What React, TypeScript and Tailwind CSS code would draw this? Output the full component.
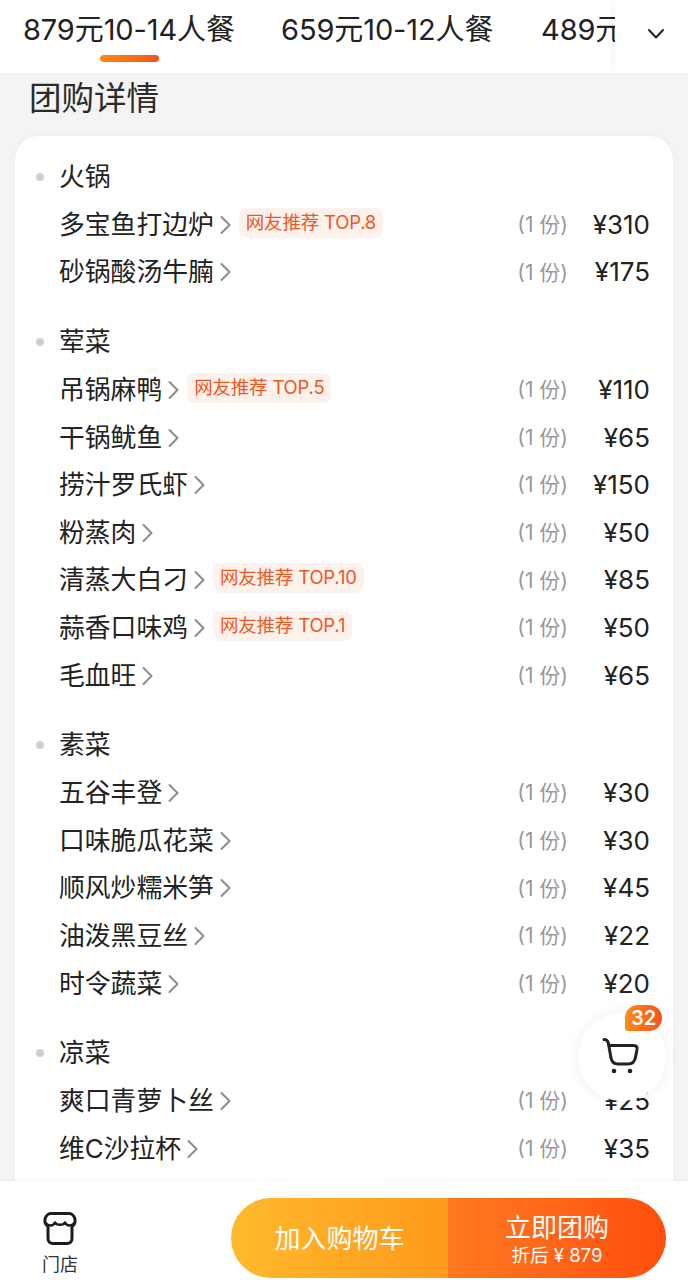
const font = { fontFamily: 'Inter, "Noto Sans CJK SC", sans-serif' };

type Dish = { name: string; price: number; top?: string };

const sections: { title: string; dishes: Dish[] }[] = [
  {
    title: '火锅',
    dishes: [
      { name: '多宝鱼打边炉', price: 310, top: 'TOP.8' },
      { name: '砂锅酸汤牛腩', price: 175 },
    ],
  },
  {
    title: '荤菜',
    dishes: [
      { name: '吊锅麻鸭', price: 110, top: 'TOP.5' },
      { name: '干锅鱿鱼', price: 65 },
      { name: '捞汁罗氏虾', price: 150 },
      { name: '粉蒸肉', price: 50 },
      { name: '清蒸大白刁', price: 85, top: 'TOP.10' },
      { name: '蒜香口味鸡', price: 50, top: 'TOP.1' },
      { name: '毛血旺', price: 65 },
    ],
  },
  {
    title: '素菜',
    dishes: [
      { name: '五谷丰登', price: 30 },
      { name: '口味脆瓜花菜', price: 30 },
      { name: '顺风炒糯米笋', price: 45 },
      { name: '油泼黑豆丝', price: 22 },
      { name: '时令蔬菜', price: 20 },
    ],
  },
  {
    title: '凉菜',
    dishes: [
      { name: '爽口青萝卜丝', price: 25 },
      { name: '维C沙拉杯', price: 35 },
    ],
  },
];

function Arrow() {
  return (
    <svg className="ml-[5px] shrink-0" width="13" height="22" viewBox="0 0 13 22" fill="none" stroke="#8c8c8c" strokeWidth="2" strokeLinecap="round" strokeLinejoin="round">
      <path d="M2.500 3l8 8-8 8" />
    </svg>
  );
}

function DishRow({ dish }: { dish: Dish }) {
  return (
    <div className="flex h-[47.6px] items-center pr-[23px] pl-[44px]">
      <span className="text-[25.8px] leading-none text-[#222]">{dish.name}</span>
      <Arrow />
      {dish.top && (
        <span className="relative -top-[2px] ml-[7px] flex h-[30px] items-center rounded-[8px] bg-[#fdf1ec] px-[7px] text-[18.5px] tracking-[-0.2px] text-[#f0561f]">
          网友推荐 {dish.top}
        </span>
      )}
      <span className="ml-auto text-[21px] text-[#999]">(1 份)</span>
      <span className="w-[82px] text-right text-[26px] leading-none text-[#222]">¥{dish.price}</span>
    </div>
  );
}

export default function App() {
  return (
    <div className="relative flex h-[1280px] w-[688px] flex-col overflow-hidden bg-[#f4f4f4]" style={font}>
      <div className="relative h-[73px] shrink-0 overflow-hidden bg-white">
        <div className="flex h-[58px] items-center whitespace-nowrap pl-[23px] text-[29px] leading-none tracking-[-0.1px] text-[#222]">
          <span className="w-[258px]">879元10-14人餐</span>
          <span className="w-[260px]">659元10-12人餐</span>
          <span>489元</span>
        </div>
        <div className="absolute top-[55px] left-[100px] h-[7px] w-[59px] rounded-full bg-gradient-to-r from-[#ff8a0d] to-[#f4511e]" />
        <div className="absolute top-0 right-0 flex h-[73px] w-[73px] items-center justify-center bg-white shadow-[-3px_0_6px_rgba(0,0,0,0.03)]">
          <svg className="mt-[-6px] ml-[8px]" width="18" height="12" viewBox="0 0 18 12" fill="none" stroke="#222" strokeWidth="2" strokeLinecap="round" strokeLinejoin="round">
            <path d="M2 2l7 7.500L16 2" />
          </svg>
        </div>
      </div>

      <div className="min-h-0 flex-1 overflow-hidden px-[15px]">
        <div className="flex h-[63px] items-center pb-[11px] pl-[14px] text-[32.5px] leading-none text-[#2b2b2b]">团购详情</div>
        <div className="rounded-t-[24px] bg-white pt-[16px] pb-[20px] shadow-[0_0_8px_rgba(0,0,0,0.03)]">
          {sections.map((section, i) => (
            <div key={section.title} className={i > 0 ? 'mt-[21px]' : ''}>
              <div className="flex h-[49px] items-center pl-[21px] text-[25.8px] leading-none text-[#222]">
                <span className="mr-[15px] h-[8px] w-[8px] rounded-full bg-[#cfcfcf]" />
                {section.title}
              </div>
              {section.dishes.map((dish) => (
                <DishRow key={dish.name} dish={dish} />
              ))}
            </div>
          ))}
        </div>
      </div>

      <div className="flex h-[99px] shrink-0 items-end bg-white pr-[22px] pb-[2px] pl-[40px] shadow-[0_-1px_4px_rgba(0,0,0,0.03)]">
        <div className="mb-[1px] flex w-[40px] flex-col items-center">
          <svg width="36" height="36" viewBox="0 0 36 36" fill="none" stroke="#1c1c1c" strokeWidth="3" strokeLinejoin="round" strokeLinecap="round">
            <path d="M9 3.500h18c3 0 5.500 2.500 6 6 .4 3-.6 5.500-3 6.800v12.200c0 3-2 5-5 5H11c-3 0-5-2-5-5V16.300c-2.400-1.300-3.400-3.800-3-6.800.5-3.500 3-6 6-6z" />
            <path d="M3.500 13c3 3.500 7.500 3.500 9.500-.5 1.500 3 8.500 3 10 0 2 4 6.500 4 9.500.5" strokeWidth="2.600" />
          </svg>
          <span className="mt-[7px] text-[18px] leading-[24px] text-[#333]">门店</span>
        </div>
        <div className="ml-auto flex h-[80px] w-[435px] overflow-hidden rounded-full text-white">
          <div className="flex w-[217px] items-center justify-center bg-gradient-to-r from-[#ffb92c] to-[#ff991c] text-[26px]">
            加入购物车
          </div>
          <div className="flex flex-1 flex-col items-center justify-center bg-gradient-to-r from-[#ff7a20] to-[#ff4d0d] pt-[1px]">
            <span className="text-[26px] leading-[32px]">立即团购</span>
            <span className="text-[18.5px] leading-[22px]">折后 ¥ 879</span>
          </div>
        </div>
      </div>

      <div className="absolute top-[1013px] left-[578px] flex h-[88px] w-[88px] items-center justify-center rounded-full bg-white shadow-[0_0_14px_rgba(0,0,0,0.07)]">
        <svg className="mr-[2px] mt-[-2px]" width="40" height="40" viewBox="0 0 40 40" fill="none" stroke="#222" strokeWidth="3" strokeLinecap="round" strokeLinejoin="round">
          <path d="M3 3.500c2.500 0 3.800 1 4.300 3.500l2.700 15c.7 4 3 6 7 6h10c4 0 6.500-2 7.300-6l1.700-8.500c.4-2.500-.8-4-3.300-4H7.500" />
          <circle cx="13" cy="35" r="2.300" fill="#222" stroke="none" />
          <circle cx="29" cy="35" r="2.300" fill="#222" stroke="none" />
        </svg>
      </div>
      <div className="absolute top-[1005px] left-[625px] flex h-[26px] w-[37px] items-center justify-center rounded-t-[13px] rounded-br-[13px] rounded-bl-[3px] bg-gradient-to-r from-[#ff8a14] to-[#f4511e] text-[20px] font-semibold leading-none text-white">
        32
      </div>
    </div>
  );
}
